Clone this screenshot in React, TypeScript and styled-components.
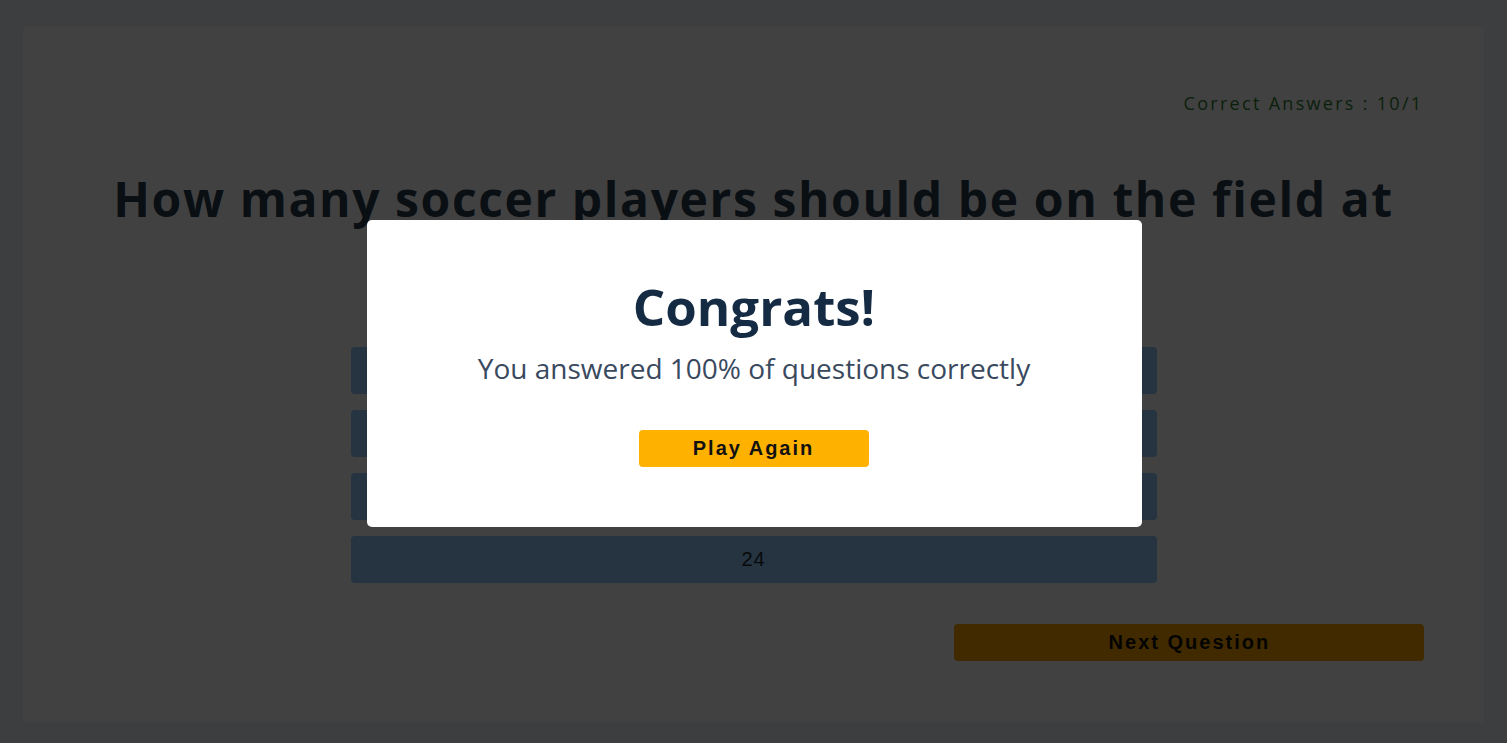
import React from "react";
import styled, { createGlobalStyle } from "styled-components";

const GlobalStyle = createGlobalStyle`
  html, body {
    margin: 0;
    padding: 0;
    height: 100%;
  }
  body {
    background: #eff3fb;
    font-family: "Open Sans", "Noto Sans", sans-serif;
    overflow: hidden;
  }
`;

const Page = styled.div`
  min-height: 743px;
  padding-top: 27px;
  box-sizing: border-box;
`;

const Card = styled.main`
  width: 97%;
  height: 695px;
  margin: 0 auto;
  background: #ffffff;
  border-radius: 3px;
  box-sizing: border-box;
  padding: 64px 60px 0 60px;
  display: flex;
  flex-direction: column;
`;

const ScoreRow = styled.div`
  display: flex;
  justify-content: flex-end;
`;

const Score = styled.span`
  color: #2e7d32;
  font-size: 18px;
  letter-spacing: 2.3px;
  line-height: 24px;
  margin-right: 1px;
`;

const Question = styled.h1`
  margin: 55px 0 0;
  text-align: center;
  font-size: 48px;
  font-weight: 700;
  letter-spacing: 1.6px;
  line-height: 58px;
  color: #283b4f;
`;

const Answers = styled.div`
  width: 806px;
  margin: 61px auto 0;
  display: flex;
  flex-direction: column;
  gap: 16px;
`;

const Answer = styled.button`
  height: 47px;
  border: none;
  border-radius: 4px;
  background: #90caf9;
  color: #1c2630;
  font-family: "Liberation Sans", Arial, sans-serif;
  font-size: 20px;
  letter-spacing: 1px;
`;

const Footer = styled.div`
  display: flex;
  justify-content: flex-end;
  margin-top: 41px;
`;

const ActionButton = styled.button<{ $width: number; $color: string }>`
  width: ${(p) => p.$width}px;
  height: 37px;
  border: none;
  border-radius: 4px;
  background: ${(p) => p.$color};
  color: #111;
  font-family: "Liberation Sans", Arial, sans-serif;
  font-weight: 700;
  font-size: 20px;
  letter-spacing: 2px;
  cursor: pointer;
`;

const Overlay = styled.div`
  position: fixed;
  inset: 0;
  background: rgba(0, 0, 0, 0.745);
  display: flex;
  align-items: center;
  justify-content: center;
`;

const Modal = styled.div`
  width: 775px;
  height: 307px;
  background: #ffffff;
  border-radius: 5px;
  box-sizing: border-box;
  padding-top: 56px;
  display: flex;
  flex-direction: column;
  align-items: center;
  margin-left: 1px;
  margin-top: 4px;
`;

const Congrats = styled.h2`
  margin: 0;
  font-size: 51px;
  font-weight: 700;
  line-height: 60px;
  color: #142b43;
`;

const Result = styled.p`
  margin: 13px 0 0;
  font-size: 28px;
  font-weight: 400;
  line-height: 38px;
  color: #3a4a5e;
`;

const ModalActions = styled.div`
  margin-top: 43px;
  margin-left: -1px;
`;

const answers = ["", "", "", "24"];

export default function App() {
  return (
    <>
      <GlobalStyle />
      <Page>
        <Card>
          <ScoreRow>
            <Score>Correct Answers : 10/1</Score>
          </ScoreRow>
          <Question>
            How many soccer players should be on the field at the same time?
          </Question>
          <Answers>
            {answers.map((a, i) => (
              <Answer key={i}>{a}</Answer>
            ))}
          </Answers>
          <Footer>
            <ActionButton $width={470} $color="#ffa500">
              Next Question
            </ActionButton>
          </Footer>
        </Card>
      </Page>
      <Overlay>
        <Modal>
          <Congrats>Congrats!</Congrats>
          <Result>You answered 100% of questions correctly</Result>
          <ModalActions>
            <ActionButton $width={230} $color="#ffb100">
              Play Again
            </ActionButton>
          </ModalActions>
        </Modal>
      </Overlay>
    </>
  );
}
